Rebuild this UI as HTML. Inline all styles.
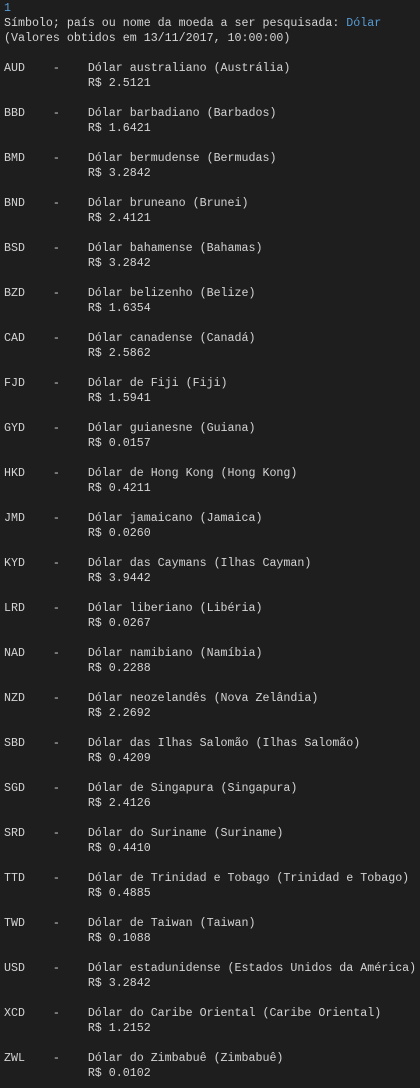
<!DOCTYPE html>
<html><head><meta charset="utf-8"><style>
html,body{margin:0;padding:0;background:#1e1e1e;width:420px;height:1088px;overflow:hidden}
pre{margin:0;padding:1px 0 0 4px;font-family:"Liberation Mono",monospace;font-size:11.65px;line-height:15px;color:#d4d4d4;white-space:pre}
.b{color:#569cd6}
</style></head><body><pre><span class="b">1</span>
Símbolo; país ou nome da moeda a ser pesquisada: <span class="b">Dólar</span>
(Valores obtidos em 13/11/2017, 10:00:00)

AUD    -    Dólar australiano (Austrália)
            R$ 2.5121

BBD    -    Dólar barbadiano (Barbados)
            R$ 1.6421

BMD    -    Dólar bermudense (Bermudas)
            R$ 3.2842

BND    -    Dólar bruneano (Brunei)
            R$ 2.4121

BSD    -    Dólar bahamense (Bahamas)
            R$ 3.2842

BZD    -    Dólar belizenho (Belize)
            R$ 1.6354

CAD    -    Dólar canadense (Canadá)
            R$ 2.5862

FJD    -    Dólar de Fiji (Fiji)
            R$ 1.5941

GYD    -    Dólar guianesne (Guiana)
            R$ 0.0157

HKD    -    Dólar de Hong Kong (Hong Kong)
            R$ 0.4211

JMD    -    Dólar jamaicano (Jamaica)
            R$ 0.0260

KYD    -    Dólar das Caymans (Ilhas Cayman)
            R$ 3.9442

LRD    -    Dólar liberiano (Libéria)
            R$ 0.0267

NAD    -    Dólar namibiano (Namíbia)
            R$ 0.2288

NZD    -    Dólar neozelandês (Nova Zelândia)
            R$ 2.2692

SBD    -    Dólar das Ilhas Salomão (Ilhas Salomão)
            R$ 0.4209

SGD    -    Dólar de Singapura (Singapura)
            R$ 2.4126

SRD    -    Dólar do Suriname (Suriname)
            R$ 0.4410

TTD    -    Dólar de Trinidad e Tobago (Trinidad e Tobago)
            R$ 0.4885

TWD    -    Dólar de Taiwan (Taiwan)
            R$ 0.1088

USD    -    Dólar estadunidense (Estados Unidos da América)
            R$ 3.2842

XCD    -    Dólar do Caribe Oriental (Caribe Oriental)
            R$ 1.2152

ZWL    -    Dólar do Zimbabuê (Zimbabuê)
            R$ 0.0102
</pre></body></html>
